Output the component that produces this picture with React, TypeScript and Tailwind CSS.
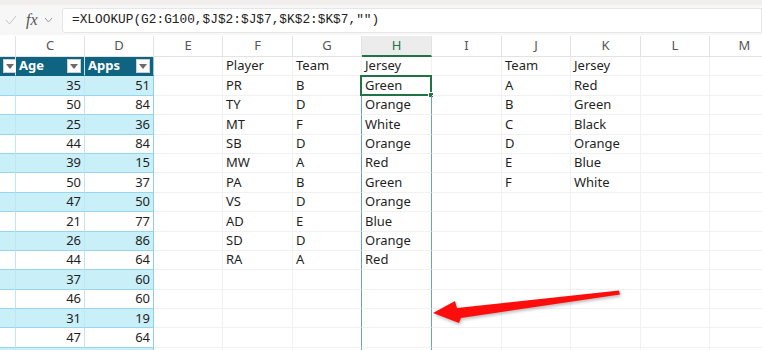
import React from "react";

const colWidths = [16, 69, 69, 69, 70, 69, 70, 70, 69, 70, 69, 70];
const letters = ["", "C", "D", "E", "F", "G", "H", "I", "J", "K", "L", "M"];

const tableRows = [
  [35, 51], [50, 84], [25, 36], [44, 84], [39, 15], [50, 37], [47, 50],
  [21, 77], [26, 86], [44, 64], [37, 60], [46, 60], [31, 19], [47, 64], ["", ""],
];

const players = [
  ["PR", "B", "Green"], ["TY", "D", "Orange"], ["MT", "F", "White"], ["SB", "D", "Orange"],
  ["MW", "A", "Red"], ["PA", "B", "Green"], ["VS", "D", "Orange"], ["AD", "E", "Blue"],
  ["SD", "D", "Orange"], ["RA", "A", "Red"],
];

const lookup = [["A", "Red"], ["B", "Green"], ["C", "Black"], ["D", "Orange"], ["E", "Blue"], ["F", "White"]];

function FilterButton() {
  return (
    <div className="flex h-[14px] w-[14px] shrink-0 items-center justify-center border border-[#cfcfcf] bg-white">
      <svg width="8" height="5" viewBox="0 0 8 5">
        <polygon points="0,0 8,0 4,5" fill="#6b6b6b" />
      </svg>
    </div>
  );
}

function Cell({ i, children, className = "" }: { i: number; children?: React.ReactNode; className?: string }) {
  return (
    <div
      style={{ width: colWidths[i] }}
      className={`relative flex h-full shrink-0 items-center border-r border-b border-[#f1f1f1] px-[3px] ${className}`}
    >
      {children}
    </div>
  );
}

export default function App() {
  const rows = Array.from({ length: 16 });
  return (
    <div
      className="relative h-[350px] w-[762px] overflow-hidden bg-white text-[13px] text-[#1f1f1f]"
      style={{ fontFamily: '"Noto Sans", "Liberation Sans", sans-serif' }}
    >
      {/* formula bar */}
      <div className="flex h-[35px] items-center border-t-[5px] border-[#f3eeee] bg-[#f7f7f7]">
        <div className="flex w-[62px] shrink-0 items-center pl-[5px]">
          <svg width="12" height="10" viewBox="0 0 12 10" className="mr-[9px]">
            <polyline points="1,5 4.5,9 11,1" fill="none" stroke="#c4c4c4" strokeWidth="1" />
          </svg>
          <span className="text-[16px] italic text-[#555]" style={{ fontFamily: '"Liberation Serif", serif' }}>
            fx
          </span>
          <svg width="9" height="6" viewBox="0 0 9 6" className="ml-[6px]">
            <polyline points="1,1 4.5,5 8,1" fill="none" stroke="#9a9a9a" strokeWidth="1" />
          </svg>
        </div>
        <div
          className="flex h-[25px] flex-1 items-center rounded-l-[3px] border border-[#e6e6e6] bg-white pl-[9px] text-[12.8px] text-[#222]"
          style={{ fontFamily: '"Liberation Mono", monospace' }}
        >
          =XLOOKUP(G2:G100,$J$2:$J$7,$K$2:$K$7,"")
        </div>
      </div>

      {/* column headers */}
      <div className="flex h-[22px] bg-white pt-[1px]">
        {letters.map((l, i) => (
          <div
            key={i}
            style={{ width: colWidths[i] }}
            className={`flex shrink-0 items-center justify-center border-r border-b border-[#e3e3e3] ${
              l === "H" ? "border-b-2 border-b-[#217346] bg-[#ececec] text-[#217346]" : "text-[#555]"
            }`}
          >
            {l}
          </div>
        ))}
      </div>

      {/* grid */}
      {rows.map((_, r) => {
        const band = r % 2 === 1;
        const tableBg = r === 0 ? "bg-[#0f6482] text-white font-bold" : band ? "bg-[#c9eff9]" : "bg-white";
        const tableBorder = r === 0 ? "border-b-[#0f6482]" : "border-b-[#97d6ec]";
        const p = r >= 1 && r <= 10 ? players[r - 1] : null;
        const lk = r >= 1 && r <= 6 ? lookup[r - 1] : null;
        const t = r >= 1 ? tableRows[r - 1] : null;
        return (
          <div key={r} className="flex h-[19.4px]">
            <Cell i={0} className={`${tableBg} ${tableBorder} border-r-[#bfe6f3] px-0`}>
              {r === 0 && <FilterButton />}
            </Cell>
            <Cell i={1} className={`${tableBg} ${tableBorder} border-r-[#bfe6f3] justify-end`}>
              {r === 0 ? (
                <>
                  <span className="mr-auto">Age</span>
                  <FilterButton />
                </>
              ) : (
                t?.[0]
              )}
            </Cell>
            <Cell i={2} className={`${tableBg} ${tableBorder} border-r-[#8fcde6] justify-end`}>
              {r === 0 ? (
                <>
                  <span className="mr-auto">Apps</span>
                  <FilterButton />
                </>
              ) : (
                t?.[1]
              )}
            </Cell>
            <Cell i={3} />
            <Cell i={4}>{r === 0 ? "Player" : p?.[0]}</Cell>
            <Cell i={5} className={r >= 1 ? "border-r-[#6f9ad9]" : ""}>
              {r === 0 ? "Team" : p?.[1]}
            </Cell>
            <Cell i={6} className={r >= 1 ? "border-r-[#6f9ad9] px-[2px]" : "px-[2px]"}>
              {r === 0 ? "Jersey" : p?.[2]}
              {r === 1 && (
                <div className="absolute -top-[1px] -left-[2px] -right-[1px] -bottom-[1px] border-2 border-[#217346]">
                  <div className="absolute -right-[4px] -bottom-[4px] h-[6px] w-[6px] border border-white bg-[#217346]" />
                </div>
              )}
            </Cell>
            <Cell i={7} />
            <Cell i={8}>{r === 0 ? "Team" : lk?.[0]}</Cell>
            <Cell i={9}>{r === 0 ? "Jersey" : lk?.[1]}</Cell>
            <Cell i={10} />
            <Cell i={11} />
          </div>
        );
      })}

      {/* arrow annotation */}
      <svg className="pointer-events-none absolute left-0 top-0" width="762" height="350">
        <polygon
          points="433,313 455,301 457,308 619,290.5 620,294.5 461,318 459,323"
          fill="#ff0d0d"
          style={{ filter: "drop-shadow(1px 2px 1.5px rgba(0,0,0,0.25))" }}
        />
      </svg>
    </div>
  );
}
